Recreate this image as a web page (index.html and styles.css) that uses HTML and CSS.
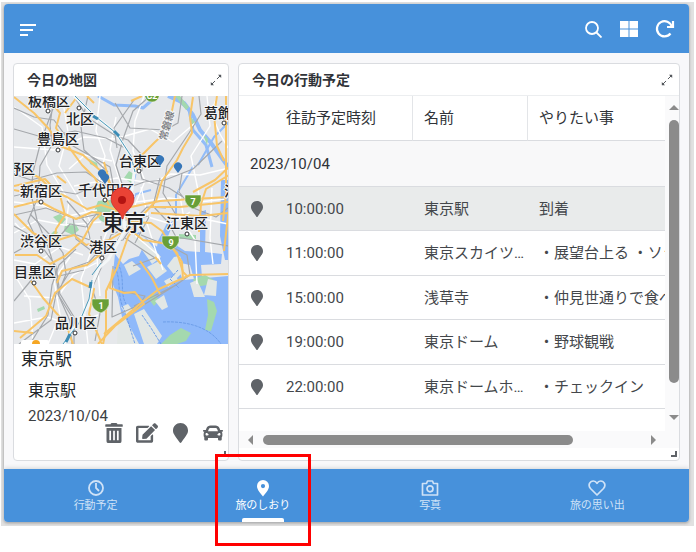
FILE: index.html
```html
<!DOCTYPE html>
<html lang="ja">
<head>
<meta charset="utf-8">
<meta name="viewport" content="width=device-width, initial-scale=1">
<title>旅のしおり</title>
<link rel="stylesheet" href="styles.css">
</head>
<body>
<svg class="sprite" width="0" height="0" aria-hidden="true">
  <symbol id="marker" viewBox="0 0 384 512"><path d="M172.268 501.67C26.97 291.031 0 269.413 0 192 0 85.961 85.961 0 192 0s192 85.961 192 192c0 77.413-26.97 99.031-172.268 309.67-9.535 13.774-29.93 13.773-39.464 0z"/></symbol>
  <symbol id="expand" viewBox="0 0 12 12"><path d="M1.5 10.500 10.500 1.500" fill="none" stroke="currentColor" stroke-dasharray="5 2.700"/><path d="M8 .8h3.200v3.200zM.8 8v3.200h3.200z"/></symbol>
</svg>
<div class="frame">
  <div class="app">
    <header class="topbar">
      <button class="icon-btn menu" type="button" aria-label="メニュー">
        <svg width="17" height="14" viewBox="0 0 17 14"><path d="M0 3h16M0 8h13M0 13h8" stroke="currentColor" stroke-width="2"/></svg>
      </button>
      <button class="icon-btn" type="button" aria-label="検索">
        <svg width="18" height="18" viewBox="0 0 18 18" fill="none" stroke="currentColor" stroke-width="1.800"><circle cx="8" cy="8" r="6"/><path d="m12.500 12.500 5 5"/></svg>
      </button>
      <button class="icon-btn" type="button" aria-label="表示切替">
        <svg width="20" height="18" viewBox="0 0 20 18"><path d="M1 1h8.500v7.500H1zM10.500 1H19v7.500h-8.500zM1 9.500h8.500V17H1zM10.500 9.500H19V17h-8.500z"/></svg>
      </button>
      <button class="icon-btn" type="button" aria-label="更新">
        <svg width="20" height="20" viewBox="0 0 20 20" fill="none" stroke="currentColor" stroke-width="2.200"><path d="M15.500 14.500A7.600 7.600 0 1 1 16.800 7.500"/><path d="M18 2v6h-6"/></svg>
      </button>
    </header>

    <main class="board">
      <section class="card">
        <div class="card-head">
          <h2>今日の地図</h2>
          <button class="expand" type="button" aria-label="拡大"><svg width="12" height="12"><use href="#expand"/></svg></button>
        </div>
        <svg class="map" viewBox="14 96 214 248" role="img" aria-label="東京の地図">
          <rect class="land" x="14" y="96" width="215" height="248"/>
          <g class="water">
            <path d="M115 254l8 10 6-5 10-3 4-9-9-12 5-3 14 12 12 8 10 10 8 18 11-1 35-3v68H133l-10-22-5-25-6-15z"/>
            <path d="M158 241l9-18 7-2-7 18 18 12 15 1 0-40 6-2-1 42 17 2-1 10-20 1 1 12-8 2-4-14-14-3-3 9-8-1-10-11z"/>
            <path d="M221 180h8v80h-4l-5-24z"/>
          </g>
          <g class="river">
            <path stroke-width="4" d="M168 96l16 7 9 12 7 15 11 13 18 25"/>
            <path stroke-width="3" d="M174 96l15 14 4 20 13 15 6 22"/>
            <path stroke-width="3" d="M98 96l16 9 21 1 8 2 8-7"/>
            <path stroke-width="3" d="M135 174l-4 16-7 17 10 19"/>
            <path stroke-width="2" d="M151 190l-15 4-7 12M194 165l-18 30 0 30M198 165l16-28 15-15"/>
          </g>
          <g class="park">
            <path d="M98 201l13-1 9 10-1 12-9 4-10-6-6-9z"/>
            <path d="M65 224l10-1 4 7-6 5-9-4zM53 217l7-3 6 5-5 6zM48 241l9-2 4 5-4 4-8-2z"/>
            <path d="M89 159l8 4 1 5-8-4zM124 178l5-7 5 3-3 9zM49 236l5-5 4 1-4 7zM37 309l7-3 1 3-7 3z"/>
            <path d="M175 96l5 0 9 11-3 3zM189 115l7 8-3 3zM203 134l5 5-1 6zM193 279l12-4 9 5-1 4-18 3z"/>
            <path d="M207 299l7 3 3 9-6 20-6-1 3-15zM170 335l11-7 10 5-5 8-9 3h-16zM153 293l6 7-5 6-6-8zM179 234l17 1 0 4-17 0zM106 218l7 2 0 7-6-2z"/>
          </g>
          <g class="islands">
            <path d="M124 265l8-4 9 8-12 7zM133 237l8-4 20 24-9 7zM147 267l12-6 8 10-11 8zM174 257l6-1 5 14-8 8-10-12zM164 281l11-6 3 5-10 7z"/>
            <path d="M190 283l7-3 8 17-11 0zM208 279l9 2-1 15-12-1zM155 301l9-6 4 12-6 3zM134 314l10-5 18 27-5 8h-13zM118 320l6-4 15 28h-22zM121 307l7-3 6 8-8 3z"/>
          </g>
          <g class="bay-lines">
            <path d="M115 267c7 15 1 28 10 45l10 32M118 263c8 18 1 28 8 41M163 322c20-1 45 3 58 22M142 315l9 13 10 16M178 270l-8 9 9 9"/>
          </g>
          <g class="streets">
            <path d="M14 107l28 20 5 38 22 36-3 25M62 96l6 36-9 34 22 36 10 21M100 96l-4 35 9 25-8 32M144 96l-9 25-2 30 12 30-10 24M118 138l32-9 23 13 22-19M116 117l-6 33 12 38M207 96l3 30-19 30 8 39M14 147l40 3 30-13 31 2M69 169l16-14 27 6M74 186l43-8 35 5 19-9 29 1 29-7"/>
            <path d="M14 202l31 4 23 10 29-6M14 233l24-13 26 5 37-3M14 260l21 4 25-17 23 8M24 296l33 2 16-23 25-13M14 323l33-6 25 8 26-10M48 344l12-29-6-35 16-23M17 279l13 21 3 44M84 216l8 33-11 30 7 65M141 187l7 30 23 7 19-12M146 220l12 38M179 190l6 35 10 15 2 44M212 188l-2 50 3 26M169 216l30 2 29 6M15 223l25 27M136 202l33-4 30 4 27-3M107 231l-10 26 3 39M126 226l11 11 21 18 5 15M217 97l-6 16 9 21 8 14"/>
          </g>
          <g class="rail">
            <path d="M54 96l-4 29 2 20-12 21-2 31-10 24 9 19 19 26 4 28 14 23 0 27M54 106l-13 35-8 31-2 22 6 26 11 27 7 22 4 27 13 21"/>
            <path d="M14 108l20 9 20 3 19 26 37 21 5 28M14 129l28 8 33-6 31 7 19 10M75 98l13 20 28 18 12 4 13 14 1 17M88 96l-7 31 3 23 24 22M150 96l-17 15-10 28-7 26 7 22-3 21M115 103l15 25 35 2 13-7 4-27M117 148l-3-20 20-28"/>
            <path d="M14 174l17 6 26-7 29-1 24 16 18-3M14 196l32-7 30 5 26-11 17 8 25-9 21-2 28-11 29-28M14 215l32-7 30 11 23-5 17 8 20-4 11-11 19 1M14 253l30-17 33-1 23 9 23-4 15-23M19 344l32-24 5-26 16-26 17-6 14-16M30 214l20 21 13 18 3 21-8 20 12 27 2 23M67 201l20 23 5 25 22-4 18-26 17-3M73 217l3 22 26 20 9-24 31-15M76 249l-17 16-7 20-4 30-18 29"/>
            <path d="M125 238l30 20-22 8M141 235l35 14 11 6 3 20-14 10-39 24 8-13-25-5M149 217l-14 26M176 285l-42 21M101 236l1 30-10 22 8 25-5 28M137 160l5 19 27 9 14 9M160 178l-7 28 15 16 8 15 53 9M199 96l2 18-12 19-22 33-4 27 13 22M182 173l-3 19 12 15 25 10 12-9M14 301l24-29 17 5 29-7M113 266l-1 51 25-11M14 226l30 17 12-2 14-17 16 3 12-15 22 2 10-12"/>
          </g>
          <g class="highway">
            <path d="M14 97l20 16 15 16 11 17 23 9 20 18 14 21M46 96l14 17-4 15 15 22 11 15 13 13 14 27M77 97l-12 16M87 96l7 7M14 165l26 13 13 13 14 6 20 12 14-4 16 5 28-6 15-3 70-4M14 186l31-7 15 16 5 20-9 14-2 14M14 207l25-6 15 8 22 10 16-7 15 2 14-5"/>
            <path d="M104 162l6 22 8 15 2 14 11 9 20 1 11 8 12 19 8 12 1 18M193 97l-3 20 2 16-9 15-6 12-15 21-6 20-16 17-12 19-11 31-11 23 0 39-5 24M136 170l6-15 13-13 13-12 7-34M131 101l11-5M151 213l50 3 28-3M151 207l29 0 49-5M14 214l19 19 19 9 22-7 12 10 23-5 17-10 12-16M15 255l22 0 13 9 15-8 17-15 11-20 8-7M31 281l12 17 23 26 7 20"/>
            <path d="M113 269l-3 19 14 5 11-1 9 12-29 22-17 18M104 334l37-31 18-14 31-14 39-1M140 261l12 17 8 16M155 257l6 7M133 232l10 8 25 4 9 9 6 19 4 4M226 96l0 98-3 27M217 96l-3 18 3 32 7 15M229 208l-5 43M229 175l-23 14-5 15-2 28M193 192l22-12 14-13M20 338l26-22 9-23 17-14 22 10-5 25 13 30M57 283l5-12 25-6 14-11M14 331l19 2M57 176l9 7M14 190l19 4"/>
          </g>
          <g class="main-rail">
            <path class="white-rail" d="M74 96l22 21 20 16 12 19 7 13-3 25-9 20 2 20-17 30-9 8-6 14-5 24-24 38"/>
            <path d="M75 96l21 21 20 16 15 23 4 16M92 280l-3 19-10 24-16 21M101 263l-9 12"/>
            <path class="train" d="M93 116l5 3M114 131l5 5M90 288l1-6M66 342l4-8"/>
          </g>
          <g class="shield">
            <path d="M144 92h15v5q-2 5-7 5t-7-5zM185 195h16v6q-2 6-8 8-6-2-8-8zM162 236h17v6q-2 6-8 8-7-2-9-8zM92 299h17v6q-2 6-8 8-7-2-9-8z"/>
            <text x="193" y="205">7</text><text x="171" y="246">9</text><text x="101" y="309">1</text><text x="152" y="99">C2</text>
          </g>
          <g class="place">
            <text x="28" y="106">板橋区</text><text x="66" y="124">北区</text><text x="37" y="144">豊島区</text>
            <text x="119" y="166">台東区</text><text x="35" y="174" text-anchor="end">中野区</text><text x="20" y="196">新宿区</text>
            <text x="78" y="195">千代田区</text><text x="204" y="118">葛飾区</text><text x="224" y="196">江戸川区</text>
            <text x="166" y="228">江東区</text><text x="20" y="246">渋谷区</text><text x="89" y="252">港区</text>
            <text x="14" y="277">目黒区</text><text x="55" y="328">品川区</text>
            <text class="city" x="102" y="230">東京</text>
            <text class="line-name" transform="translate(166 141) rotate(-74)">常磐線</text>
          </g>
          <g class="dots">
            <circle cx="48" cy="111" r="2"/><circle cx="79" cy="108" r="2"/><circle cx="58" cy="150" r="2"/><circle cx="139" cy="171" r="2"/><circle cx="41" cy="202" r="2"/><circle cx="105" cy="200" r="2"/><circle cx="224" cy="123" r="2"/><circle cx="41" cy="251" r="2"/><circle cx="102" cy="258" r="2"/><circle cx="34" cy="283" r="2"/><circle cx="75" cy="333" r="2"/><circle cx="187" cy="234" r="2"/>
          </g>
          <g class="pins">
            <path id="pin" d="M102 180l-3-4a4 4 0 1 1 6 0z"/>
            <use href="#pin" x="3" y="4"/><use href="#pin" x="58" y="-14"/><use href="#pin" x="76" y="-7"/>
          </g>
          <path class="red-pin" d="M122 219c-1-8-11-11-11-20a11 11 0 0 1 23 0c0 9-10 12-11 20z"/>
          <circle class="red-core" cx="122" cy="200" r="4"/>
          <rect class="pegbox" x="21" y="340" width="28" height="8" rx="2"/>
          <circle class="pegman" cx="36" cy="344" r="4"/>
        </svg>
        <div class="detail">
          <h3>東京駅</h3>
          <div class="detail-body">
            <p class="spot">東京駅</p>
            <p class="date">2023/10/04</p>
          </div>
          <div class="actions">
            <button type="button" aria-label="削除"><svg width="18" height="20" viewBox="0 0 448 512"><path d="M432 32H312l-9-19A24 24 0 0 0 281 0H167a24 24 0 0 0-22 13l-9 19H16A16 16 0 0 0 0 48v32a16 16 0 0 0 16 16h416a16 16 0 0 0 16-16V48a16 16 0 0 0-16-16z"/><path fill-rule="evenodd" d="M32 128h384v336a48 48 0 0 1-48 48H80a48 48 0 0 1-48-48zM104 200v240h44V200zM202 200v240h44V200zM300 200v240h44V200z"/></svg></button>
            <button type="button" aria-label="編集"><svg width="22" height="20" viewBox="0 0 576 512"><path d="M402.6 83.2l90.2 90.2c3.8 3.8 3.8 10 0 13.8L274.4 405.6l-92.8 10.3c-12.4 1.4-22.9-9.1-21.5-21.5l10.3-92.8L388.8 83.2c3.8-3.8 10-3.8 13.8 0zm162-22.9l-48.8-48.8c-15.2-15.2-39.9-15.2-55.2 0l-35.4 35.4c-3.8 3.8-3.8 10 0 13.8l90.2 90.2c3.8 3.8 10 3.8 13.8 0l35.4-35.4c15.2-15.3 15.2-40 0-55.2zM384 346.2V448H64V128h229.8c3.2 0 6.2-1.3 8.5-3.5l40-40c7.6-7.6 2.2-20.5-8.5-20.5H48C21.500 64 0 85.500 0 112v352c0 26.500 21.500 48 48 48h352c26.500 0 48-21.500 48-48V306.200c0-10.700-12.900-16-20.500-8.500l-40 40c-2.200 2.300-3.500 5.300-3.500 8.500z"/></svg></button>
            <button type="button" aria-label="地図"><svg width="15" height="20"><use href="#marker"/></svg></button>
            <button type="button" aria-label="経路"><svg width="20" height="20" viewBox="0 0 512 512"><path d="M499.99 176h-59.87l-16.64-41.6C406.38 91.63 365.57 64 319.5 64h-127c-46.06 0-86.88 27.63-103.99 70.4L71.87 176H12.01C4.2 176-1.53 183.34.37 190.91l6 24C7.7 220.25 12.5 224 18.01 224h20.07C24.65 235.73 16 252.78 16 272v48c0 16.12 6.16 30.67 16 41.93V416c0 17.67 14.33 32 32 32h32c17.67 0 32-14.33 32-32v-32h256v32c0 17.67 14.33 32 32 32h32c17.67 0 32-14.33 32-32v-54.07c9.84-11.25 16-25.8 16-41.93v-48c0-19.22-8.65-36.27-22.07-48H494c5.51 0 10.31-3.75 11.64-9.09l6-24c1.89-7.57-3.84-14.91-11.65-14.91zm-352.06-17.83c7.29-18.22 24.94-30.17 44.57-30.17h127c19.63 0 37.28 11.95 44.57 30.17L384 208H128l19.93-49.83zM96 319.8c-19.2 0-32-12.76-32-31.9S76.8 256 96 256s48 28.71 48 47.85-28.8 15.95-48 15.95zm320 0c-19.2 0-48 3.19-48-15.95S396.8 256 416 256s32 12.76 32 31.9-12.8 31.9-32 31.9z"/></svg></button>
          </div>
        </div>
        <span class="resize"></span>
      </section>

      <section class="card">
        <div class="card-head ruled">
          <h2>今日の行動予定</h2>
          <button class="expand" type="button" aria-label="拡大"><svg width="12" height="12"><use href="#expand"/></svg></button>
        </div>
        <div class="scroller">
          <table class="plan">
            <colgroup><col class="c-pin"><col class="c-time"><col class="c-name"><col></colgroup>
            <thead>
              <tr><td></td><th scope="col">往訪予定時刻</th><th scope="col" class="split">名前</th><th scope="col" class="split">やりたい事</th></tr>
            </thead>
            <tbody>
              <tr class="group"><th colspan="4" scope="rowgroup">2023/10/04</th></tr>
              <tr class="current"><td><svg width="12" height="16"><use href="#marker"/></svg></td><td>10:00:00</td><td>東京駅</td><td>到着</td></tr>
              <tr><td><svg width="12" height="16"><use href="#marker"/></svg></td><td>11:00:00</td><td>東京スカイツリー</td><td class="cut">・展望台上る ・ソラマチ</td></tr>
              <tr><td><svg width="12" height="16"><use href="#marker"/></svg></td><td>15:00:00</td><td>浅草寺</td><td class="cut">・仲見世通りで食べ歩き</td></tr>
              <tr><td><svg width="12" height="16"><use href="#marker"/></svg></td><td>19:00:00</td><td>東京ドーム</td><td>・野球観戦</td></tr>
              <tr><td><svg width="12" height="16"><use href="#marker"/></svg></td><td>22:00:00</td><td>東京ドームホテル</td><td>・チェックイン</td></tr>
            </tbody>
          </table>
          <div class="bar-y" aria-hidden="true"><i class="arrow up"></i><i class="thumb"></i><i class="arrow down"></i></div>
          <div class="bar-x" aria-hidden="true"><i class="arrow left"></i><i class="thumb"></i><i class="arrow right"></i></div>
        </div>
        <span class="resize"></span>
      </section>
    </main>

    <nav class="tabs">
      <a href="#schedule"><svg width="18" height="18" viewBox="0 0 18 18" fill="none" stroke="currentColor" stroke-width="1.800"><circle cx="9" cy="9" r="7"/><path d="M9 4v5l3 3"/></svg>行動予定</a>
      <a href="#guide" class="active" aria-current="page"><svg width="18" height="18" viewBox="0 0 18 18"><path fill-rule="evenodd" d="M9 1a6 6 0 0 1 6 6c0 4-3.500 7-6 10.500C6.500 14 3 11 3 7a6 6 0 0 1 6-6zm0 4a2 2 0 1 0 0 4.200A2 2 0 0 0 9 5z"/></svg>旅のしおり<span class="focus-box"></span></a>
      <a href="#photos"><svg width="18" height="18" viewBox="0 0 18 18" fill="none" stroke="currentColor" stroke-width="1.700"><path d="M1.500 4.500h4L6.500 2h5l1 2.500h4V16h-15z" stroke-linejoin="round"/><circle cx="9" cy="9.800" r="3"/></svg>写真</a>
      <a href="#memories"><svg width="18" height="18" viewBox="0 0 18 18" fill="none" stroke="currentColor" stroke-width="1.700"><path d="M9 16L2.500 9.500C-.5 6 2 2 5.300 2 7.200 2 8.300 3 9 4.300 9.700 3 10.800 2 12.700 2c3.300 0 5.800 4 2.800 7.500z" stroke-linejoin="round"/></svg>旅の思い出</a>
    </nav>
  </div>
</div>
</body>
</html>
```
FILE: styles.css
```css
* { box-sizing: border-box; }

body {
  min-height: 100vh;
  margin: 0;
  padding: 2px 2px 0 1px;
  background: #fff;
  color: #212529;
  font: 15px/20px Roboto, "Noto Sans CJK JP", sans-serif;
}

h2, h3, p { margin: 0; font-weight: 400; }
svg { display: block; fill: currentColor; }
svg[fill="none"] { fill: none; }
.sprite { position: absolute; }
button { padding: 0; border: 0; background: none; color: inherit; font: inherit; }

.frame { padding: 2px 5px 4px 3px; background: #e1e1e1; }
.app {
  border-radius: 4px;
  background: #f8f8fa;
  box-shadow: 0 1px 3px #8e8e8e;
}

/* Top bar */
.topbar {
  display: flex;
  align-items: center;
  height: 49px;
  padding: 0 6px;
  border-radius: 4px 4px 0 0;
  background: #4791db;
  color: #fff;
}
.icon-btn { display: grid; place-items: center; width: 36px; height: 36px; }
.icon-btn.menu { margin-right: auto; }

/* Cards */
.board {
  display: grid;
  grid-template-columns: minmax(0, 216fr) minmax(0, 442fr);
  gap: 9px;
  padding: 10px 9px 8px;
}
.card {
  position: relative;
  overflow: hidden;
  border: 1px solid #dadce0;
  border-radius: 4px;
  background: #fff;
}
.card-head {
  display: flex;
  align-items: center;
  justify-content: space-between;
  height: 32px;
  padding: 0 6px 0 13px;
}
.card-head.ruled { border-bottom: 1px solid #eceef0; }
.card-head h2 { font-size: 14px; font-weight: 700; color: #303338; }
.expand { color: #54585c; }
.resize {
  position: absolute;
  right: 2px;
  bottom: 3px;
  width: 6px;
  height: 6px;
  border: solid #5f6368;
  border-width: 0 2px 2px 0;
}

/* Map */
.map { width: 100%; height: auto; }
.map path { fill: none; stroke-linejoin: round; }
.map .land { fill: #e6e8eb; }
.map .water path { fill: #8fb9fa; }
.map .river path { stroke: #92bcf8; }
.map .park path { fill: #a4d9ae; }
.map .islands path { fill: #e2e7e5; }
.map .bay-lines path { stroke: #6d9ee9; stroke-width: 1; stroke-dasharray: 3 1; }
.map .streets path { stroke: #fff; stroke-width: 1.4; }
.map .rail path { stroke: #a5a8ac; stroke-width: 1.2; }
.map .highway path { stroke: #f8c568; stroke-width: 2; }
.map .main-rail path { stroke: #4b9aba; stroke-width: 1; }
.map .main-rail .white-rail { stroke: #f4f7f8; stroke-width: 3; }
.map .main-rail .train { stroke: #3c8cb5; stroke-width: 3; }
.map .shield path { fill: #689f38; stroke: #fff; stroke-width: 0.5; }
.map .shield text { fill: #fff; font-size: 9px; font-weight: 700; text-anchor: middle; }
.map .place text {
  fill: #202124;
  stroke: #f4f5f6;
  stroke-width: 2px;
  paint-order: stroke;
  font-size: 14px;
  font-weight: 500;
}
.map .place .city { font-size: 22px; }
.map .place .line-name { fill: #74777b; font-size: 10px; }
.map .dots circle { fill: #fff; stroke: #303134; stroke-width: 1; }
.map .pins path { fill: #3676b8; }
.map .red-pin { fill: #ea4335; stroke: #c5221f; stroke-width: 0.6; }
.map .red-core { fill: #b31412; }
.map .pegbox { fill: #fff; }
.map .pegman { fill: #f5a623; }

/* Selected place */
.detail { padding: 5px 4px 17px 7px; }
.detail h3 { font-size: 17px; }
.detail-body { padding: 12px 0 0 7px; }
.spot { font-size: 16px; }
.date { margin-top: 8px; line-height: 14px; color: #3c4043; }
.actions { display: flex; justify-content: flex-end; gap: 11px; color: #5f6368; }
.actions button { display: grid; place-items: center; width: 22px; height: 20px; }

/* Plan table */
.scroller {
  display: grid;
  grid-template-columns: minmax(0, 1fr) 14px;
  grid-template-rows: 335px 17px;
}
.plan {
  align-self: start;
  width: 100%;
  table-layout: fixed;
  border-collapse: separate;
  border-spacing: 0;
}
.c-pin { width: 46px; }
.c-time { width: 127px; }
.c-name { width: 115px; }
.plan th, .plan td {
  height: 45px;
  padding: 0 1px 0 12px;
  overflow: hidden;
  border-bottom: 1px solid #dadce0;
  text-align: left;
  text-overflow: ellipsis;
  white-space: nowrap;
  font-weight: 400;
}
.plan td { color: #44474b; }
.plan th { color: #303338; }
.plan .split { padding-left: 11px; border-left: 1px solid #e3e5e8; }
.plan .cut { text-overflow: clip; padding-right: 0; }
.plan td:first-child { padding-left: 12px; color: #5f6368; }
.plan td:nth-child(2), .plan th:nth-child(2) { padding-left: 1px; }
.plan tbody tr:nth-child(even) td { height: 44px; }
.plan .group th { height: 46px; padding-left: 11px; background: #f8f8f9; }
.plan .current td { background: #e9ebeb; }

/* Scroll bars */
.bar-y, .bar-x { display: flex; align-items: center; background: #fafafb; }
.bar-y { flex-direction: column; padding: 9px 0 11px 3px; }
.bar-x { grid-column: 1 / -1; padding: 0 23px 0 9px; }
.thumb { flex: 1; border-radius: 5px; background: #8b8b8b; }
.bar-y .thumb { width: 10px; margin: 10px 0 32px; }
.bar-x .thumb { height: 10px; margin: 0 78px 0 10px; }
.arrow { border: 5px solid transparent; }
.arrow.up { border-top: 0; border-bottom-color: #8b8b8b; }
.arrow.down { border-bottom: 0; border-top-color: #8b8b8b; }
.arrow.left { border-left: 0; border-right-color: #8b8b8b; }
.arrow.right { border-right: 0; border-left-color: #8b8b8b; }

/* Bottom tabs */
.tabs {
  display: grid;
  grid-template-columns: repeat(4, 1fr);
  height: 53px;
  padding: 0 8px;
  border-radius: 0 0 4px 4px;
  background: #4791db;
  box-shadow: 0 -1px 4px #d4d6d9;
}
.tabs a {
  position: relative;
  display: flex;
  flex-direction: column;
  align-items: center;
  gap: 1px;
  padding-top: 10px;
  color: #cfe2f7;
  font-size: 11px;
  line-height: 16px;
  text-decoration: none;
}
.tabs .active { color: #fff; }
.tabs .active::after {
  content: "";
  width: 42px;
  height: 4px;
  margin-top: auto;
  border-radius: 2px 2px 0 0;
  background: #fff;
}
.focus-box {
  position: absolute;
  top: -15px;
  left: calc(50% - 48px);
  width: 96px;
  height: 92px;
  border: 3px solid #f00;
}
```
